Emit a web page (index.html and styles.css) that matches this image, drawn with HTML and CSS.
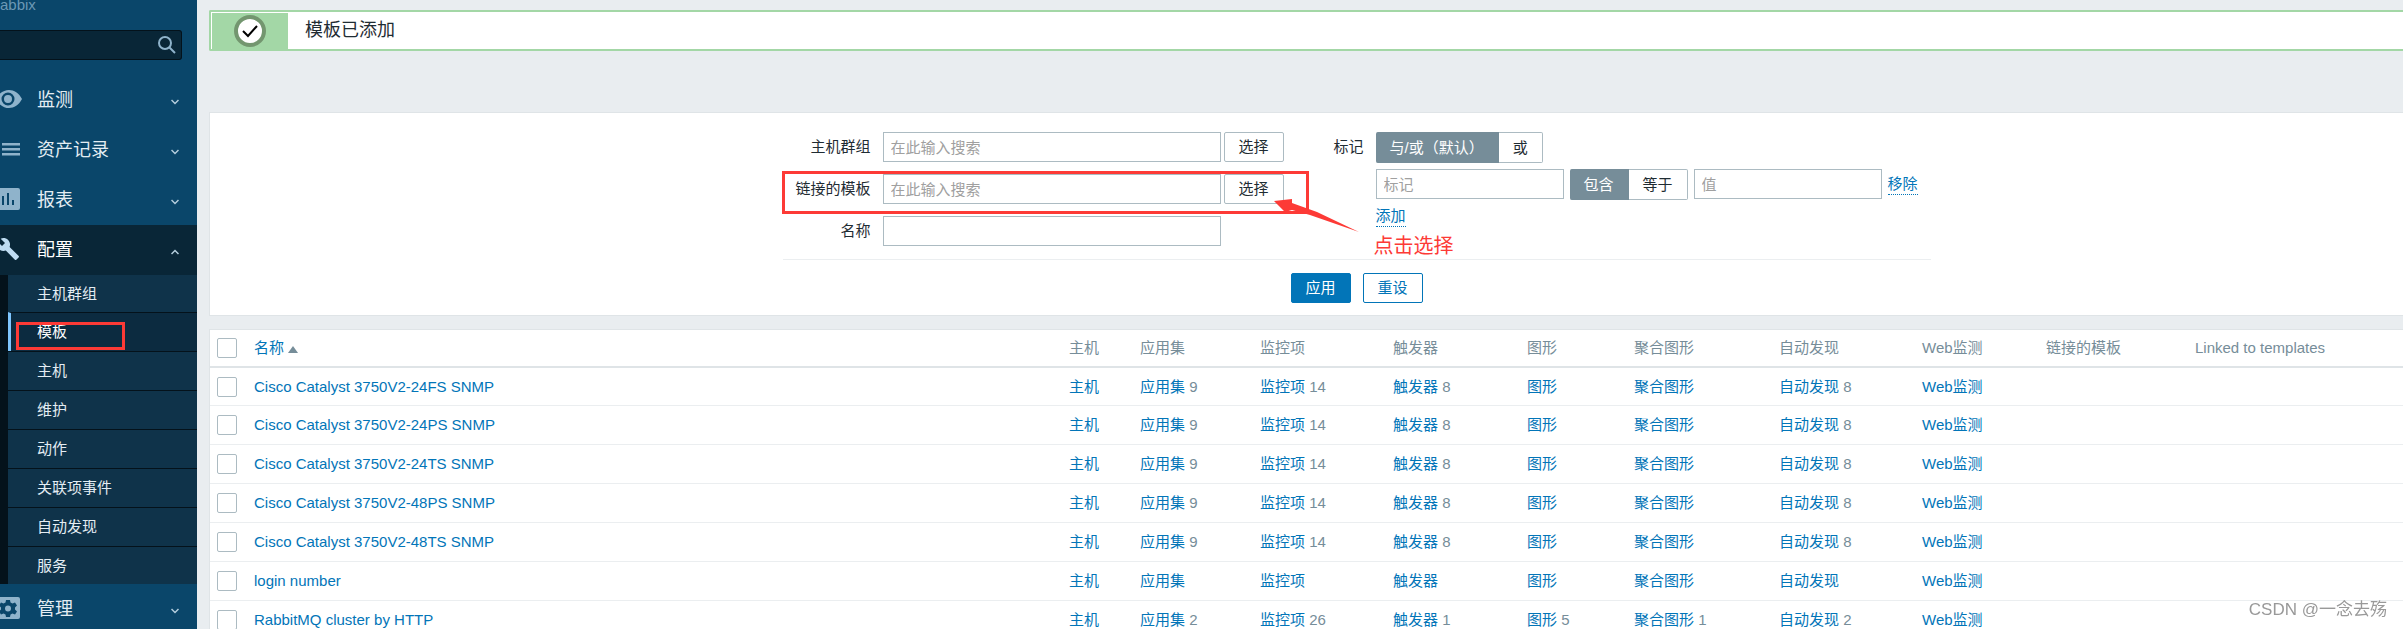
FILE: index.html
```
<!DOCTYPE html>
<html lang="zh-CN">
<head>
    <meta charset="UTF-8">
    <meta name="viewport" content="width=device-width, initial-scale=1.0">
    <title>配置模板</title>
    <link rel="stylesheet" href="styles.css">
</head>
<body>
    <aside class="sidebar">
        <div class="server-name">abbix</div>
        <form class="search">
            <input type="text" aria-label="搜索">
            <button type="button" aria-label="搜索">
                <svg width="20" height="20" viewBox="0 0 20 20"><circle cx="8" cy="8" r="6" /><path d="M12 12l6 6" /></svg>
            </button>
        </form>
        <nav>
            <a class="menu-item" href="#">
                <svg class="icon" width="24" height="24" viewBox="0 0 24 24"><path fill-rule="evenodd" d="M-4 12C-1 6 4 3 9 3s10 3 13 9c-3 6-8 9-13 9S-1 18-4 12zM8 5.500a6.500 6.500 0 1 0 0 13 6.500 6.500 0 0 0 0-13zM8 8a4 4 0 1 1 0 8 4 4 0 0 1 0-8z" /></svg>
                <span>监测</span>
                <svg class="chevron" width="8" height="6" viewBox="0 0 8 6"><path d="M.5 1L4 4.500 7.500 1" /></svg>
            </a>
            <a class="menu-item" href="#">
                <svg class="icon" width="24" height="24" viewBox="0 0 24 24"><path d="M2 6h18v2.500H2zM2 11h18v2.500H2zM2 16h18v2.500H2z" /></svg>
                <span>资产记录</span>
                <svg class="chevron" width="8" height="6" viewBox="0 0 8 6"><path d="M.5 1L4 4.500 7.500 1" /></svg>
            </a>
            <a class="menu-item" href="#">
                <svg class="icon" width="24" height="24" viewBox="0 0 24 24"><path fill-rule="evenodd" d="M-4 1h22q2 0 2 2v18q0 2-2 2H-4zM2 9v9h2V9zM7 6v12h2V6zM12 13v5h2v-5z" /></svg>
                <span>报表</span>
                <svg class="chevron" width="8" height="6" viewBox="0 0 8 6"><path d="M.5 1L4 4.500 7.500 1" /></svg>
            </a>
            <a class="menu-item open" href="#">
                <svg class="icon" width="24" height="24" viewBox="0 0 24 24"><path transform="translate(-4 0)" d="M22.700 19l-9.100-9.100c.9-2.300.4-5-1.500-6.900-2-2-5-2.400-7.400-1.300L9 6 6 9 1.600 4.700C.4 7.100.9 10.100 2.900 12.100c1.900 1.900 4.600 2.400 6.900 1.500l9.100 9.100c.4.4 1 .4 1.400 0l2.300-2.300c.5-.4.5-1.100.1-1.400z" /></svg>
                <span>配置</span>
                <svg class="chevron" width="8" height="6" viewBox="0 0 8 6"><path d="M.5 5L4 1.500 7.500 5" /></svg>
            </a>
            <ul class="submenu">
                <li><a href="#">主机群组</a></li>
                <li class="selected"><a href="#">模板</a></li>
                <li><a href="#">主机</a></li>
                <li><a href="#">维护</a></li>
                <li><a href="#">动作</a></li>
                <li><a href="#">关联项事件</a></li>
                <li><a href="#">自动发现</a></li>
                <li><a href="#">服务</a></li>
            </ul>
            <a class="menu-item" href="#">
                <svg class="icon" width="24" height="24" viewBox="0 0 24 24"><path fill-rule="evenodd" d="M-4 1h22q2 0 2 2v18q0 2-2 2H-4zM6 4l-.5 2.500-2 1L1 6.500l-2 3 2 2v2l-2 2 2 3 2.500-1 2 1L6 21h4l.5-2.500 2-1 2.500 1 2-3-2-2v-2l2-2-2-3-2.500 1-2-1L10 4zM8 9.500a3 3 0 1 1 0 6 3 3 0 0 1 0-6z" /></svg>
                <span>管理</span>
                <svg class="chevron" width="8" height="6" viewBox="0 0 8 6"><path d="M.5 1L4 4.500 7.500 1" /></svg>
            </a>
        </nav>
    </aside>

    <main>
        <div class="message">
            <div class="message-icon">
                <svg width="32" height="32" viewBox="0 0 32 32"><circle cx="16" cy="16" r="14" /><path d="M9 16l5 5 9-10" /></svg>
            </div>
            <span>模板已添加</span>
        </div>

        <form class="filter">
            <div class="filter-body">
                <div class="filter-left">
                    <div class="field">
                        <label for="groups">主机群组</label>
                        <input type="text" id="groups" placeholder="在此输入搜索">
                        <button type="button">选择</button>
                    </div>
                    <div class="field marked">
                        <label for="templates">链接的模板</label>
                        <input type="text" id="templates" placeholder="在此输入搜索">
                        <button type="button">选择</button>
                        <svg class="arrow" width="88" height="36" viewBox="0 0 88 36"><path d="M0 2L18 0v4l25 9 42 20-49-17-18-5-7 2z" /></svg>
                        <span class="note">点击选择</span>
                    </div>
                    <div class="field">
                        <label for="name">名称</label>
                        <input type="text" id="name">
                    </div>
                </div>
                <div class="filter-right">
                    <span class="tags-label">标记</span>
                    <div class="tags">
                        <div class="segmented">
                            <input type="radio" name="evaltype" id="andor" checked><label for="andor">与/或（默认）</label>
                            <input type="radio" name="evaltype" id="or"><label for="or">或</label>
                        </div>
                        <div class="tag-row">
                            <input type="text" placeholder="标记" aria-label="标记">
                            <div class="segmented">
                                <input type="radio" name="operator" id="contains" checked><label for="contains">包含</label>
                                <input type="radio" name="operator" id="equals"><label for="equals">等于</label>
                            </div>
                            <input type="text" placeholder="值" aria-label="值">
                            <a class="dotted" href="#">移除</a>
                        </div>
                        <a class="dotted" href="#">添加</a>
                    </div>
                </div>
            </div>
            <div class="filter-buttons">
                <button type="button" class="primary">应用</button>
                <button type="button" class="secondary">重设</button>
            </div>
        </form>

        <table class="list">
            <colgroup>
                <col class="c-check"><col><col class="c-hosts"><col class="c-apps"><col class="c-items"><col class="c-triggers"><col class="c-graphs"><col class="c-screens"><col class="c-discovery"><col class="c-web"><col class="c-linked"><col class="c-linked-to">
            </colgroup>
            <thead>
                <tr>
                    <th><input type="checkbox" aria-label="全选"></th>
                    <th><a href="#">名称<span class="sort"></span></a></th>
                    <th>主机</th>
                    <th>应用集</th>
                    <th>监控项</th>
                    <th>触发器</th>
                    <th>图形</th>
                    <th>聚合图形</th>
                    <th>自动发现</th>
                    <th>Web监测</th>
                    <th>链接的模板</th>
                    <th>Linked to templates</th>
                </tr>
            </thead>
            <tbody id="rows"></tbody>
        </table>
    </main>

    <div class="watermark">CSDN @一念去殇</div>

    <script src="script.js"></script>
</body>
</html>
```
FILE: styles.css
```
*, *::after {
    box-sizing: border-box;
}

body {
    display: flex;
    align-items: flex-start;
    height: 100vh;
    margin: 0;
    overflow: hidden;
    background-color: #e9edf0;
    color: #1f2c33;
    font-family: "Liberation Sans", "Noto Sans CJK SC", sans-serif;
    font-size: 15px;
    line-height: 20px;
}

a {
    color: #0275b8;
    text-decoration: none;
}

input, button {
    font: inherit;
    color: inherit;
}

button {
    cursor: pointer;
}

/* 侧边栏 */
.sidebar {
    flex: none;
    width: 197px;
    min-height: 100vh;
    background-color: #0a466a;
}

.server-name {
    height: 30px;
    margin-top: -5px;
    color: #6c98b5;
}

.search {
    display: flex;
    align-items: center;
    height: 30px;
    margin: 5px 15px 15px 0;
    background-color: #092637;
    border: 1px solid #04121b;
    border-left: 0;
    border-radius: 0 3px 3px 0;
}

.search input {
    flex: 1;
    min-width: 0;
    background: none;
    border: 0;
    outline: none;
}

.search button {
    display: flex;
    padding: 0 4px;
    background: none;
    border: 0;
}

.search svg {
    fill: none;
    stroke: #8fb3cb;
    stroke-width: 2;
}

.menu-item {
    display: flex;
    align-items: center;
    height: 50px;
    padding-right: 18px;
    color: #e4edf3;
    font-size: 18px;
}

.menu-item span {
    flex: 1;
    margin-left: 13px;
}

.menu-item .icon {
    margin-bottom: 2px;
    fill: #8fb3cb;
}

.menu-item .chevron {
    margin-top: 3px;
    fill: none;
    stroke: #b5cede;
    stroke-width: 1.5;
}

.menu-item.open {
    background-color: #092637;
    color: #fff;
}

.menu-item.open .icon {
    fill: #bfdcf2;
}

.submenu {
    margin: 0;
    padding: 0 0 0 8px;
    background-color: #04121b;
    list-style: none;
}

.submenu li {
    height: 39px;
    border-top: 1px solid #04121b;
    background-color: #0f334a;
}

.submenu li:first-child {
    height: 37px;
    border-top: 0;
}

.submenu li:last-child {
    height: 38px;
}

.submenu a {
    display: flex;
    align-items: center;
    height: 100%;
    padding-left: 29px;
    color: #e4edf3;
}

.submenu .selected {
    position: relative;
    background-color: #0c2b40;
    border-left: 3px solid #7fc6ff;
}

.submenu .selected a {
    padding-left: 26px;
    color: #fff;
}

.submenu .selected::after {
    content: "";
    position: absolute;
    top: 9px;
    left: 5px;
    width: 109px;
    height: 28px;
    border: 3px solid #fd3a36;
}

/* 主区域 */
main {
    flex: 1;
    min-width: 0;
    padding: 10px 0 0 12px;
}

.message {
    display: flex;
    height: 41px;
    margin-bottom: 61px;
    border: 2px solid #a3d7a6;
    border-right: 0;
    border-radius: 2px 0 0 2px;
    background-color: #fff;
    font-size: 18px;
    line-height: 36px;
}

.message-icon {
    display: flex;
    align-items: center;
    justify-content: center;
    width: 76px;
    margin: 1px 17px 0 1px;
    background-color: #a3d7a6;
}

.message-icon circle {
    fill: #fff;
    stroke: #73966f;
    stroke-width: 4;
}

.message-icon path {
    fill: none;
    stroke: #000;
    stroke-width: 2;
}

/* 过滤器 */
.filter {
    display: flex;
    flex-direction: column;
    align-items: center;
    margin-bottom: 13px;
    padding: 19px 0 12px 100px;
    border: 1px solid #dfe4e7;
    border-right: 0;
    background-color: #fff;
}

.filter-body {
    display: flex;
    gap: 50px;
    width: 1148px;
    padding-bottom: 13px;
    border-bottom: 1px solid #ebeef0;
}

.filter input[type="text"] {
    width: 188px;
    height: 30px;
    padding: 0 7px;
    border: 1px solid #acbbc2;
    background-color: #fff;
}

.filter input::placeholder {
    color: #a0a0a0;
}

.filter-left {
    display: flex;
    flex-direction: column;
    gap: 12px;
}

.field {
    display: flex;
    align-items: center;
}

.field label {
    width: 88px;
    margin-right: 12px;
    text-align: right;
}

.filter .field input {
    width: 338px;
    margin-right: 3px;
}

.filter button {
    width: 60px;
    height: 30px;
    padding: 0;
    border: 1px solid #acbbc2;
    border-radius: 2px;
    background-color: #fff;
}

.marked {
    position: relative;
}

/* 红色标注 */
.marked::after {
    content: "";
    position: absolute;
    top: -3px;
    left: -1px;
    width: 527px;
    height: 43px;
    border: 3px solid #fd3a36;
}

.arrow {
    position: absolute;
    top: 25px;
    left: 491px;
    z-index: 1;
    fill: #fd3a36;
}

.note {
    position: absolute;
    top: 62px;
    left: 591px;
    color: #fd3a36;
    font-size: 20px;
    white-space: nowrap;
}

.filter-right {
    display: flex;
    gap: 12px;
}

.tags-label {
    line-height: 30px;
}

.tags {
    display: flex;
    flex-direction: column;
    align-items: flex-start;
    gap: 6px;
}

.segmented {
    display: flex;
}

.segmented input {
    position: absolute;
    opacity: 0;
}

.segmented label {
    height: 31px;
    padding: 0 14px;
    border: 1px solid #acbbc2;
    border-left: 0;
    border-radius: 0 2px 2px 0;
    line-height: 29px;
}

.segmented input:checked + label {
    border-color: #768d99;
    border-radius: 2px 0 0 2px;
    background-color: #768d99;
    color: #fff;
}

.tag-row {
    display: flex;
    align-items: flex-start;
    gap: 6px;
}

.dotted {
    border-bottom: 1px dotted #0275b8;
}

.tag-row .dotted {
    margin-top: 5px;
}

.filter-buttons {
    display: flex;
    gap: 12px;
    margin-top: 13px;
}

.filter .primary {
    border-color: #0275b8;
    background-color: #0275b8;
    color: #fff;
}

.filter .secondary {
    border-color: #0275b8;
    color: #0275b8;
}

/* 模板列表 */
.list {
    width: 100%;
    table-layout: fixed;
    border: 1px solid #dfe4e7;
    border-right: 0;
    border-spacing: 0;
    background-color: #fff;
}

.c-check { width: 36px; }
.c-hosts { width: 71px; }
.c-apps { width: 120px; }
.c-items { width: 133px; }
.c-triggers { width: 134px; }
.c-graphs { width: 107px; }
.c-screens { width: 145px; }
.c-discovery { width: 143px; }
.c-web { width: 124px; }
.c-linked { width: 149px; }
.c-linked-to { width: 216px; }

.list th, .list td {
    height: 39px;
    padding: 0 8px;
    border-bottom: 1px solid #ebeef0;
    color: #768d99;
    font-weight: normal;
    text-align: left;
    white-space: nowrap;
}

.list th {
    border-bottom: 2px solid #dfe4e7;
}

.list tr:first-child > * {
    height: 38px;
}

.list input {
    display: block;
    appearance: none;
    width: 20px;
    height: 20px;
    margin: 0 0 0 -1px;
    border: 1px solid #acbbc2;
    border-radius: 2px;
    background-color: #fff;
}

.sort {
    display: inline-block;
    margin-left: 4px;
    border: 5px solid transparent;
    border-top: 0;
    border-bottom: 7px solid #768d99;
}

.watermark {
    position: fixed;
    right: 16px;
    bottom: 9px;
    color: #999;
    font-size: 17px;
    text-shadow: 1px 1px 0 #fff;
}
```
FILE: script.js
```
// 列顺序: 主机, 应用集, 监控项, 触发器, 图形, 聚合图形, 自动发现, Web监测
const columns = ['主机', '应用集', '监控项', '触发器', '图形', '聚合图形', '自动发现', 'Web监测'];

const templates = [
    { name: 'Cisco Catalyst 3750V2-24FS SNMP', counts: ['', 9, 14, 8, '', '', 8, ''] },
    { name: 'Cisco Catalyst 3750V2-24PS SNMP', counts: ['', 9, 14, 8, '', '', 8, ''] },
    { name: 'Cisco Catalyst 3750V2-24TS SNMP', counts: ['', 9, 14, 8, '', '', 8, ''] },
    { name: 'Cisco Catalyst 3750V2-48PS SNMP', counts: ['', 9, 14, 8, '', '', 8, ''] },
    { name: 'Cisco Catalyst 3750V2-48TS SNMP', counts: ['', 9, 14, 8, '', '', 8, ''] },
    { name: 'login number', counts: ['', '', '', '', '', '', '', ''] },
    { name: 'RabbitMQ cluster by HTTP', counts: ['', 2, 26, 1, 5, 1, 2, ''] }
];

document.getElementById('rows').innerHTML = templates.map(t => `
    <tr>
        <td><input type="checkbox" aria-label="${t.name}"></td>
        <td><a href="#">${t.name}</a></td>
        ${columns.map((c, i) => `<td><a href="#">${c}</a> ${t.counts[i]}</td>`).join('')}
        <td></td>
        <td></td>
    </tr>`).join('');
```
